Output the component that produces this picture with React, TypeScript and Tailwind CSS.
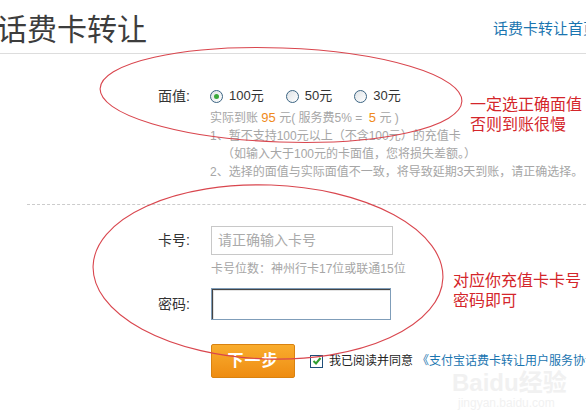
import React from "react";

const font = {
  fontFamily: '"Liberation Sans", "Noto Sans CJK SC", sans-serif',
};

const Radio = ({ checked, label }: { checked?: boolean; label: string }) => {
  return (
    <label className="flex items-center gap-[6px]">
      <span className="relative w-[13px] h-[13px] rounded-full border border-[#3b6482] bg-gradient-to-br from-[#dfe3e6] to-white flex items-center justify-center">
        {checked && <span className="w-[5px] h-[5px] rounded-full bg-[#3aa83a]" />}
      </span>
      <span className="text-[13px] text-[#333]">{label}</span>
    </label>
  );
};

const Ellipses = () => (
  <svg
    className="absolute left-0 top-0 pointer-events-none"
    width="586"
    height="418"
    viewBox="0 0 586 418"
  >
    <ellipse
      cx="281"
      cy="95"
      rx="181"
      ry="47"
      transform="rotate(2 281 95)"
      fill="none"
      stroke="#d9464e"
      strokeWidth="1.1"
    />
    <ellipse
      cx="268"
      cy="272"
      rx="175"
      ry="87"
      transform="rotate(2 268 272)"
      fill="none"
      stroke="#d9464e"
      strokeWidth="1.1"
    />
  </svg>
);

export default function App() {
  return (
    <div
      className="relative w-[586px] h-[418px] overflow-hidden bg-white"
      style={font}
    >
      {/* header */}
      <div className="flex items-center justify-between h-[54px] border-b border-[#dddddd] pt-[6px]">
        <h1 className="text-[30px] leading-[34px] text-[#3d3d3d] ml-[-3px] whitespace-nowrap">
          话费卡转让
        </h1>
        <a className="text-[15px] text-[#1a75b0] whitespace-nowrap mr-[-12px]">
          话费卡转让首页
        </a>
      </div>

      {/* amount */}
      <div className="mt-[33px] flex">
        <div className="w-[190px] text-right text-[14px] text-[#333] leading-[18px]">面值:</div>
        <div className="ml-[20px] flex items-center gap-[22px] h-[18px]">
          <Radio checked label="100元" />
          <Radio label="50元" />
          <Radio label="30元" />
        </div>
      </div>
      <div className="ml-[210px] mt-[4px] text-[12px] leading-[18px] text-[#a6a6a6] whitespace-nowrap">
        <p>
          实际到账 <span className="text-[#f08a1a] text-[13px]">95</span> 元( 服务费5% =&nbsp;&nbsp;
          <span className="text-[#f08a1a] text-[13px]">5</span> 元&nbsp;)
        </p>
        <p>1、暂不支持100元以上（不含100元）的充值卡</p>
        <p className="pl-[12px]">（如输入大于100元的卡面值，您将损失差额。）</p>
        <p>2、选择的面值与实际面值不一致，将导致延期3天到账，请正确选择。</p>
      </div>

      <div className="ml-[27px] mt-[23px] border-t border-dashed border-[#cccccc]" />

      {/* card */}
      <div className="mt-[21px] flex items-center">
        <div className="w-[190px] text-right text-[14px] text-[#333]">卡号:</div>
        <div className="ml-[21px] w-[182px] h-[29px] border border-[#c8c8c8] flex items-center px-[6px] text-[14px] text-[#aaaaaa] whitespace-nowrap">
          请正确输入卡号
        </div>
      </div>
      <p className="ml-[211px] mt-[5px] text-[12px] leading-[18px] text-[#a6a6a6] whitespace-nowrap">
        卡号位数：神州行卡17位或联通15位
      </p>

      <div className="mt-[10px] flex items-center">
        <div className="w-[190px] text-right text-[14px] text-[#333]">密码:</div>
        <div className="ml-[21px] w-[180px] h-[32px] border border-[#7f9db9] shadow-[inset_1px_1px_0_#444,inset_2px_2px_0_#e3e3e3]" />
      </div>

      {/* submit */}
      <div className="mt-[24px] ml-[211px] flex items-center">
        <button className="shrink-0 w-[84px] h-[34px] rounded-[2px] border border-[#d98210] bg-gradient-to-b from-[#f9ad2d] to-[#ee8c10] text-white text-[16px] font-bold tracking-[1px] whitespace-nowrap">
          下一步
        </button>
        <span className="shrink-0 ml-[15px] w-[13px] h-[13px] border border-[#1f4e79] bg-white flex items-center justify-center">
          <svg width="10" height="10" viewBox="0 0 10 10">
            <path d="M1.5 5 L4 7.5 L8.5 2" fill="none" stroke="#2f9e2f" strokeWidth="2" />
          </svg>
        </span>
        <span className="shrink-0 ml-[6px] text-[12px] text-[#222] whitespace-nowrap">我已阅读并同意</span>
        <a className="shrink-0 ml-[4px] text-[12px] text-[#1a75b0] whitespace-nowrap">
          《支付宝话费卡转让用户服务协议》
        </a>
      </div>

      <Ellipses />

      {/* annotations */}
      <div className="absolute left-[470px] top-[95px] text-[16px] leading-[20px] text-[#d4262b] whitespace-nowrap">
        <p>一定选正确面值</p>
        <p>否则到账很慢</p>
      </div>
      <div className="absolute left-[453px] top-[271px] text-[16px] leading-[20px] text-[#d4262b] whitespace-nowrap">
        <p>对应你充值卡卡号</p>
        <p>密码即可</p>
      </div>

      {/* watermark */}
      <div className="absolute left-[452px] top-[370px] text-[#f1f1f1] pointer-events-none whitespace-nowrap">
        <p className="text-[24px] leading-[26px] font-bold">Baidu经验</p>
        <p className="text-[12px] leading-[14px] ml-[6px]">jingyan.baidu.com</p>
      </div>
    </div>
  );
}
